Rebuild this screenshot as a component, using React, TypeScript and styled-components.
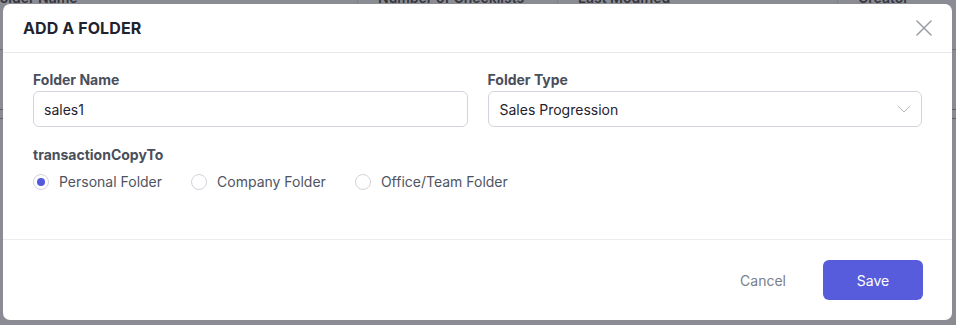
import { useState } from 'react';
import styled, { createGlobalStyle } from 'styled-components';

const GlobalStyle = createGlobalStyle`
  html, body {
    margin: 0;
    padding: 0;
    background: #8b8c93;
    font-family: Inter, "Noto Sans", sans-serif;
    -webkit-font-smoothing: antialiased;
  }
  * { box-sizing: border-box; }
`;

const Page = styled.div`
  position: relative;
  width: 956px;
  height: 325px;
  overflow: hidden;
  background: #8b8c93;
`;

/* the folder table that sits behind the dialog */
const TableBehind = styled.div`
  margin-top: -12px;
`;

const HeadRow = styled.div`
  display: grid;
  grid-template-columns: 357px 200px 280px 1fr;
  height: 62px;
  border-bottom: 1px solid #6f7077;
`;

const HeadCell = styled.div<{ $divider?: boolean; $first?: boolean }>`
  padding: 0 20px;
  margin-left: ${(p) => (p.$first ? '-28px' : '0')};
  font-size: 14px;
  line-height: 20px;
  font-weight: 600;
  color: #35363d;
  border-left: ${(p) => (p.$divider ? '1px solid #7f8087' : 'none')};
  height: 20px;
`;

const BodyRow = styled.div<{ $h: number }>`
  height: ${(p) => p.$h}px;
  border-bottom: 1px solid #5f6067;
`;

const Overlay = styled.div`
  position: absolute;
  inset: 0;
  padding: 4px 4px 5px 3px;
`;

const Dialog = styled.div`
  width: 949px;
  height: 316px;
  background: #fff;
  border-radius: 7px;
  display: flex;
  flex-direction: column;
  overflow: hidden;
`;

const Header = styled.div`
  height: 49px;
  flex: none;
  display: flex;
  align-items: center;
  justify-content: space-between;
  padding: 0 18px 0 20px;
  border-bottom: 1px solid #e8e9ee;
`;

const Title = styled.h2`
  margin: 0;
  font-size: 16px;
  font-weight: 700;
  letter-spacing: 0.1px;
  color: #1f2330;
`;

const CloseButton = styled.button`
  border: none;
  background: none;
  padding: 0;
  width: 20px;
  height: 20px;
  display: flex;
  align-items: center;
  justify-content: center;
  color: #9a9ca6;
  cursor: pointer;
`;

const Body = styled.div`
  flex: 1;
  padding: 17px 30px 0 30px;
  border-bottom: 1px solid #ececf0;
`;

const FieldGrid = styled.div`
  display: grid;
  grid-template-columns: 1fr 1fr;
  column-gap: 20px;
`;

const Field = styled.div`
  display: flex;
  flex-direction: column;
  gap: 1px;
`;

const Label = styled.label`
  font-size: 14px;
  line-height: 20px;
  font-weight: 700;
  color: #4a4f5c;
`;

const TextInput = styled.input`
  height: 36px;
  border: 1px solid #d2d4db;
  border-radius: 6px;
  padding: 0 10px;
  font-family: inherit;
  font-size: 14px;
  color: #1f2330;
  outline: none;
`;

const SelectBox = styled.div`
  height: 36px;
  border: 1px solid #d2d4db;
  border-radius: 6px;
  padding: 0 10px 0 11px;
  display: flex;
  align-items: center;
  justify-content: space-between;
  font-size: 14px;
  color: #1f2330;
`;

const RadioSection = styled.div`
  margin-top: 18px;
  display: flex;
  flex-direction: column;
  gap: 7px;
`;

const RadioRow = styled.div`
  display: flex;
  align-items: center;
  gap: 29px;
`;

const RadioOption = styled.label`
  display: flex;
  align-items: center;
  gap: 10px;
  font-size: 14px;
  line-height: 20px;
  color: #4f5462;
  cursor: pointer;
`;

const RadioCircle = styled.span<{ $checked: boolean }>`
  width: 16px;
  height: 16px;
  border-radius: 50%;
  border: 1px solid #d2d4db;
  background: #fff;
  display: flex;
  align-items: center;
  justify-content: center;

  &::after {
    content: '';
    width: 8px;
    height: 8px;
    border-radius: 50%;
    background: ${(p) => (p.$checked ? '#5559de' : 'transparent')};
  }
`;

const Footer = styled.div`
  height: 80px;
  flex: none;
  display: flex;
  align-items: center;
  justify-content: flex-end;
  gap: 13px;
  padding: 0 29px 0 0;
`;

const CancelButton = styled.button`
  border: none;
  background: none;
  height: 40px;
  padding: 0 24px;
  font-family: inherit;
  font-size: 14px;
  color: #7a7e8a;
  cursor: pointer;
`;

const SaveButton = styled.button`
  border: none;
  width: 100px;
  height: 40px;
  border-radius: 6px;
  background: #565cdc;
  color: #fff;
  font-family: inherit;
  font-size: 14px;
  cursor: pointer;
`;

const options = ['Personal Folder', 'Company Folder', 'Office/Team Folder'];

export default function App() {
  const [name, setName] = useState('sales1');
  const [copyTo, setCopyTo] = useState('Personal Folder');

  return (
    <Page>
      <GlobalStyle />
      <TableBehind>
        <HeadRow>
          <HeadCell $first>Folder Name</HeadCell>
          <HeadCell $divider>Number of Checklists</HeadCell>
          <HeadCell $divider>Last Modified</HeadCell>
          <HeadCell $divider>Creator</HeadCell>
        </HeadRow>
        <BodyRow $h={60} />
        <BodyRow $h={9} />
      </TableBehind>

      <Overlay>
        <Dialog>
          <Header>
            <Title>ADD A FOLDER</Title>
            <CloseButton aria-label="Close">
              <svg width="16" height="16" viewBox="0 0 16 16" fill="none">
                <path d="M1 1L15 15M15 1L1 15" stroke="currentColor" strokeWidth="1.5" strokeLinecap="round" />
              </svg>
            </CloseButton>
          </Header>

          <Body>
            <FieldGrid>
              <Field>
                <Label>Folder Name</Label>
                <TextInput value={name} onChange={(e) => setName(e.target.value)} />
              </Field>
              <Field>
                <Label>Folder Type</Label>
                <SelectBox>
                  <span>Sales Progression</span>
                  <svg width="14" height="8" viewBox="0 0 14 8" fill="none">
                    <path d="M1 1L7 7L13 1" stroke="#b5b7bf" strokeWidth="1" />
                  </svg>
                </SelectBox>
              </Field>
            </FieldGrid>

            <RadioSection>
              <Label>transactionCopyTo</Label>
              <RadioRow>
                {options.map((o) => (
                  <RadioOption key={o} onClick={() => setCopyTo(o)}>
                    <RadioCircle $checked={copyTo === o} />
                    {o}
                  </RadioOption>
                ))}
              </RadioRow>
            </RadioSection>
          </Body>

          <Footer>
            <CancelButton>Cancel</CancelButton>
            <SaveButton>Save</SaveButton>
          </Footer>
        </Dialog>
      </Overlay>
    </Page>
  );
}
